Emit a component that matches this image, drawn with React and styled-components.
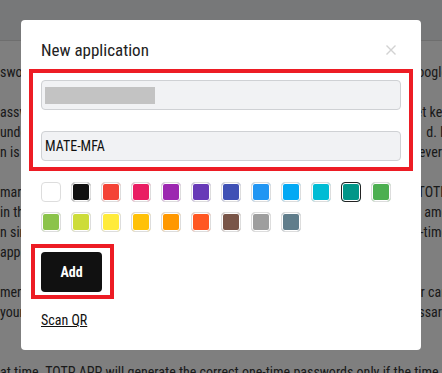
import styled, { createGlobalStyle } from 'styled-components';

const GlobalStyle = createGlobalStyle`
  html, body {
    margin: 0;
    padding: 0;
    overflow: hidden;
    background: #ffffff;
    font-family: "Roboto Condensed", Roboto, "Liberation Sans", sans-serif;
  }
`;

const swatches = [
  '#ffffff', '#111111', '#f44336', '#e91e63', '#9c27b0', '#673ab7',
  '#3f51b5', '#2196f3', '#03a9f4', '#00bcd4', '#009688', '#4caf50',
  '#8bc34a', '#cddc39', '#ffeb3b', '#ffc107', '#ff9800', '#ff5722',
  '#795548', '#9e9e9e', '#607d8b',
];

const paragraphs = [
  { gap: 0, lines: [['swords', 'Google']] },
  { gap: 20, lines: [['asswords', 'ret key'], ['understand', 'd. If'], ['n is', 'every']] },
  { gap: 20, lines: [['marize', 'o TOTP'], ['in the', 'ame'], ['n since', 'ne-time'], ['application', '']] },
  { gap: 20, lines: [['ment', 'er can'], ['your', 'essary']] },
  { gap: 40, lines: [['at time. TOTP APP will generate the correct one-time passwords only if the time of your device is right', '']] },
];

const App = () => {
  return (
    <Page>
      <GlobalStyle />
      <TopBar />
      <Article>
        {paragraphs.map((p, i) => (
          <Para key={i} $gap={p.gap}>
            {p.lines.map(([left, right], j) => (
              <Line key={j}>
                <span>{left}</span>
                <span>{right}</span>
              </Line>
            ))}
          </Para>
        ))}
      </Article>

      <Overlay>
        <Dialog>
          <Header>
            <Title>New application</Title>
            <Close aria-label="Close">
              <svg width="10" height="10" viewBox="0 0 10 10">
                <path d="M0.5 0.5 L9.5 9.5 M9.5 0.5 L0.5 9.5" stroke="#d2d2d2" strokeWidth="1.4" />
              </svg>
            </Close>
          </Header>

          <Highlight $fields>
            <Field>
              <Mask />
            </Field>
            <Field>MATE-MFA</Field>
          </Highlight>

          <Swatches>
            {swatches.map((c, i) => (
              <Swatch key={c} $color={c} $active={i === 10} />
            ))}
          </Swatches>

          <Highlight>
            <AddButton>Add</AddButton>
          </Highlight>

          <ScanLink>Scan QR</ScanLink>
        </Dialog>
      </Overlay>
    </Page>
  );
};

const Page = styled.div`
  position: relative;
  width: 100%;
  height: 373px;
  overflow: hidden;
`;

const TopBar = styled.div`
  height: 40px;
  background: #eff0f3;
  border-bottom: 1px solid #dcdcdc;
`;

const Article = styled.div`
  padding-top: 21px;
  width: calc(100% + 6px);
  color: #343434;
  font-size: 14px;
  line-height: 20px;
`;

const Para = styled.div`
  margin-top: ${(p) => p.$gap}px;
`;

const Line = styled.div`
  display: flex;
  justify-content: space-between;
  white-space: nowrap;
`;

const Overlay = styled.div`
  position: fixed;
  inset: 0;
  background: rgba(0, 0, 0, 0.5);
  display: flex;
  justify-content: center;
  align-items: flex-start;
  padding-top: 20px;
`;

const Dialog = styled.div`
  width: 400px;
  box-sizing: border-box;
  background: #ffffff;
  border-radius: 4px;
  padding: 18px 20px 20px;
  display: flex;
  flex-direction: column;
  align-items: flex-start;
`;

const Header = styled.div`
  align-self: stretch;
  display: flex;
  justify-content: space-between;
  align-items: center;
  height: 24px;
  margin-bottom: 7px;
`;

const Title = styled.div`
  font-size: 17px;
  color: #222222;
`;

const Close = styled.div`
  display: flex;
  margin-right: 5px;
`;

const Highlight = styled.div`
  border: 4px solid #ed1c24;
  display: flex;
  flex-direction: column;
  gap: 21px;
  align-self: ${(p) => (p.$fields ? 'stretch' : 'flex-start')};
  margin: ${(p) => (p.$fields ? '0 -12px' : '0 0 0 -10px')};
  padding: ${(p) => (p.$fields ? '7px 8px 6px' : '4px 8px 3px 6px')};
`;

const Field = styled.div`
  height: 30px;
  box-sizing: border-box;
  border: 1px solid #cfd1d4;
  border-radius: 4px;
  background: #f1f2f4;
  padding: 0 4px 0 3px;
  display: flex;
  align-items: center;
  font-size: 14px;
  color: #111111;
`;

const Mask = styled.span`
  width: 110px;
  height: 17px;
  background: #c3c3c3;
`;

const Swatches = styled.div`
  display: flex;
  flex-wrap: wrap;
  gap: 10px;
  width: 360px;
  margin: 11px 0 12px;
`;

const Swatch = styled.div`
  width: 20px;
  height: 20px;
  box-sizing: border-box;
  border-radius: 4px;
  border: 1px solid ${(p) => (p.$active ? '#222222' : '#dddddd')};
  background: ${(p) => p.$color};
  box-shadow: inset 0 0 0 1px #ffffff;
`;

const AddButton = styled.button`
  width: 61px;
  height: 40px;
  border: none;
  border-radius: 4px;
  background: #111111;
  color: #ffffff;
  font-family: inherit;
  font-size: 14px;
  font-weight: 700;
  padding: 0;
`;

const ScanLink = styled.span`
  margin-top: 11px;
  font-size: 14px;
  line-height: 20px;
  color: #111111;
  text-decoration: underline;
`;

export default App;
